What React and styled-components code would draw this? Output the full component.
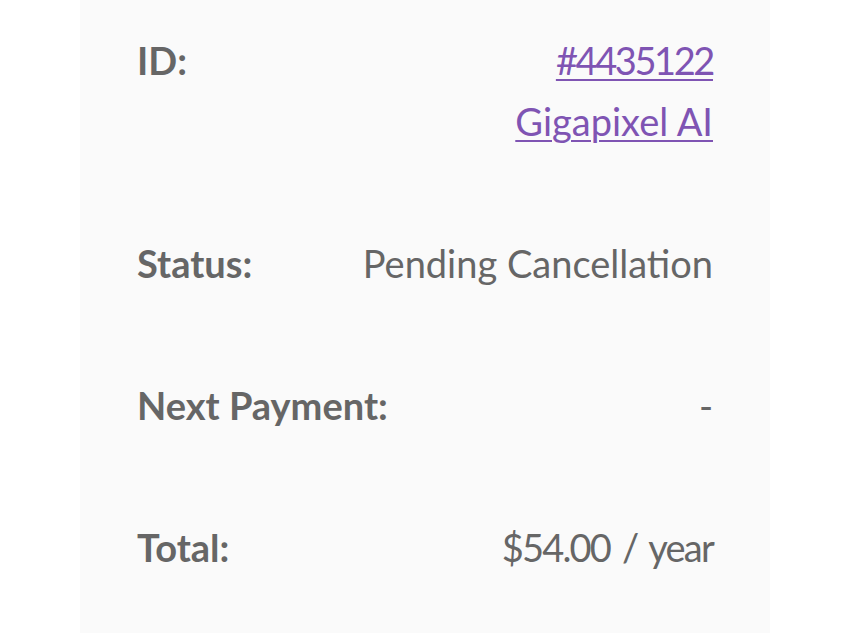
import React from "react";
import styled, { createGlobalStyle } from "styled-components";

const Global = createGlobalStyle`
  html, body { margin: 0; padding: 0; background: #ffffff; }
  body { font-family: Lato, "Noto Sans", sans-serif; }
`;

const Page = styled.div`
  padding: 0 80px;
  min-height: 633px;
  box-sizing: border-box;
`;

const Panel = styled.div`
  background: #fafafa;
  min-height: 633px;
  padding: 0 57px;
  box-sizing: border-box;
`;

const Table = styled.div`
  display: flex;
  flex-direction: column;
`;

const Row = styled.div`
  display: flex;
  justify-content: space-between;
  align-items: flex-start;
  padding: 30px 0 51px;
  font-size: 38px;
  line-height: 61px;
  color: #666666;
`;

const Label = styled.div`
  font-weight: 700;
`;

const Value = styled.div`
  text-align: right;
  display: flex;
  flex-direction: column;
  align-items: flex-end;
  letter-spacing: ${(p) => (p.$numeric ? "-1.8px" : "0")};
  word-spacing: ${(p) => (p.$numeric ? "4px" : "0")};
`;

const Link = styled.a`
  color: #7f54b3;
  text-decoration: underline;
  text-underline-offset: 4px;
  text-decoration-thickness: 2px;
  letter-spacing: ${(p) => (p.$numeric ? "-2.4px" : "0")};
`;

const rows = [
  { label: "ID:", links: [{ t: "#4435122", n: true }, { t: "Gigapixel AI", n: false }] },
  { label: "Status:", value: "Pending Cancellation" },
  { label: "Next Payment:", value: "-" },
  { label: "Total:", value: "$54.00 / year", numeric: true },
];

export default function App() {
  return (
    <>
      <Global />
      <Page>
        <Panel>
          <Table>
            {rows.map((r) => (
              <Row key={r.label}>
                <Label>{r.label}</Label>
                <Value $numeric={r.numeric}>
                  {r.links
                    ? r.links.map((l) => (
                        <Link key={l.t} href="#" $numeric={l.n}>
                          {l.t}
                        </Link>
                      ))
                    : r.value}
                </Value>
              </Row>
            ))}
          </Table>
        </Panel>
      </Page>
    </>
  );
}
